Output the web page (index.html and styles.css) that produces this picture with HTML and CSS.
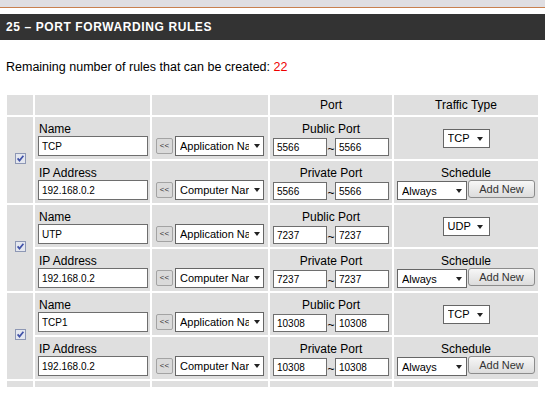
FILE: index.html
```html
<!DOCTYPE html>
<html lang="en">
<head>
  <meta charset="UTF-8">
  <title>Port Forwarding Rules</title>
  <link rel="stylesheet" href="styles.css">
</head>
<body>
  <div class="topband"></div>
  <div class="titlebar">
    <h2>25 &ndash; PORT FORWARDING RULES</h2>
  </div>

  <p class="remaining">Remaining number of rules that can be created: <span class="count">22</span></p>

  <table class="rules">
    <colgroup>
      <col class="c-chk"><col class="c-field"><col class="c-pick"><col class="c-port"><col class="c-type">
    </colgroup>
    <tr class="head">
      <td></td><td></td><td></td><td>Port</td><td>Traffic Type</td>
    </tr>

    <!-- rule 1 -->
    <tr>
      <td class="chk" rowspan="2">
        <span class="checkbox"><svg width="11" height="11" viewBox="0 0 11 11"><rect x="0.5" y="0.5" width="10" height="10" fill="#e4e7ef" stroke="#8d97b4"/><path d="M2.6 5.4 L4.5 7.6 L8.4 2.8" fill="none" stroke="#4152a8" stroke-width="1.7"/></svg></span>
      </td>
      <td class="field">
        <div class="label">Name</div>
        <div class="line"><input class="txt wide" type="text" value="TCP"></div>
      </td>
      <td class="pick">
        <div class="line mid"><button class="grab">&lt;&lt;</button><span class="sel app"><select><option>Application Name</option></select></span></div>
      </td>
      <td class="port">
        <div class="label">Public Port</div>
        <div class="line"><input class="txt num" type="text" value="5566"><span class="tilde">~</span><input class="txt num" type="text" value="5566"></div>
      </td>
      <td class="type">
        <span class="sel proto"><select><option>TCP</option></select></span>
      </td>
    </tr>
    <tr>
      <td class="field">
        <div class="label">IP Address</div>
        <div class="line"><input class="txt wide" type="text" value="192.168.0.2"></div>
      </td>
      <td class="pick">
        <div class="line mid"><button class="grab">&lt;&lt;</button><span class="sel app"><select><option>Computer Name</option></select></span></div>
      </td>
      <td class="port">
        <div class="label">Private Port</div>
        <div class="line"><input class="txt num" type="text" value="5566"><span class="tilde">~</span><input class="txt num" type="text" value="5566"></div>
      </td>
      <td class="sched">
        <div class="label">Schedule</div>
        <div class="line"><span class="sel always"><select><option>Always</option></select></span><button class="add">Add New</button></div>
      </td>
    </tr>

    <!-- rule 2 -->
    <tr>
      <td class="chk" rowspan="2">
        <span class="checkbox"><svg width="11" height="11" viewBox="0 0 11 11"><rect x="0.5" y="0.5" width="10" height="10" fill="#e4e7ef" stroke="#8d97b4"/><path d="M2.6 5.4 L4.5 7.6 L8.4 2.8" fill="none" stroke="#4152a8" stroke-width="1.7"/></svg></span>
      </td>
      <td class="field">
        <div class="label">Name</div>
        <div class="line"><input class="txt wide" type="text" value="UTP"></div>
      </td>
      <td class="pick">
        <div class="line mid"><button class="grab">&lt;&lt;</button><span class="sel app"><select><option>Application Name</option></select></span></div>
      </td>
      <td class="port">
        <div class="label">Public Port</div>
        <div class="line"><input class="txt num" type="text" value="7237"><span class="tilde">~</span><input class="txt num" type="text" value="7237"></div>
      </td>
      <td class="type">
        <span class="sel proto"><select><option>UDP</option></select></span>
      </td>
    </tr>
    <tr>
      <td class="field">
        <div class="label">IP Address</div>
        <div class="line"><input class="txt wide" type="text" value="192.168.0.2"></div>
      </td>
      <td class="pick">
        <div class="line mid"><button class="grab">&lt;&lt;</button><span class="sel app"><select><option>Computer Name</option></select></span></div>
      </td>
      <td class="port">
        <div class="label">Private Port</div>
        <div class="line"><input class="txt num" type="text" value="7237"><span class="tilde">~</span><input class="txt num" type="text" value="7237"></div>
      </td>
      <td class="sched">
        <div class="label">Schedule</div>
        <div class="line"><span class="sel always"><select><option>Always</option></select></span><button class="add">Add New</button></div>
      </td>
    </tr>

    <!-- rule 3 -->
    <tr>
      <td class="chk" rowspan="2">
        <span class="checkbox"><svg width="11" height="11" viewBox="0 0 11 11"><rect x="0.5" y="0.5" width="10" height="10" fill="#e4e7ef" stroke="#8d97b4"/><path d="M2.6 5.4 L4.5 7.6 L8.4 2.8" fill="none" stroke="#4152a8" stroke-width="1.7"/></svg></span>
      </td>
      <td class="field">
        <div class="label">Name</div>
        <div class="line"><input class="txt wide" type="text" value="TCP1"></div>
      </td>
      <td class="pick">
        <div class="line mid"><button class="grab">&lt;&lt;</button><span class="sel app"><select><option>Application Name</option></select></span></div>
      </td>
      <td class="port">
        <div class="label">Public Port</div>
        <div class="line"><input class="txt num" type="text" value="10308"><span class="tilde">~</span><input class="txt num" type="text" value="10308"></div>
      </td>
      <td class="type">
        <span class="sel proto"><select><option>TCP</option></select></span>
      </td>
    </tr>
    <tr>
      <td class="field">
        <div class="label">IP Address</div>
        <div class="line"><input class="txt wide" type="text" value="192.168.0.2"></div>
      </td>
      <td class="pick">
        <div class="line mid"><button class="grab">&lt;&lt;</button><span class="sel app"><select><option>Computer Name</option></select></span></div>
      </td>
      <td class="port">
        <div class="label">Private Port</div>
        <div class="line"><input class="txt num" type="text" value="10308"><span class="tilde">~</span><input class="txt num" type="text" value="10308"></div>
      </td>
      <td class="sched">
        <div class="label">Schedule</div>
        <div class="line"><span class="sel always"><select><option>Always</option></select></span><button class="add">Add New</button></div>
      </td>
    </tr>

    <!-- next rule, cut off by the frame -->
    <tr class="cut">
      <td></td><td></td><td></td><td></td><td></td>
    </tr>
  </table>
</body>
</html>
```

FILE: styles.css
```css
body {
  margin: 0;
  font-family: "Liberation Sans", Arial, sans-serif;
  font-size: 12px;
  color: #000;
  background-color: #fff;
}

.topband {
  height: 7px;
  background-color: #dfdee2;
  border-bottom: 1px solid #c8804f;
}

.titlebar {
  margin-top: 6px;
  height: 26px;
  background-color: #333;
}

.titlebar h2 {
  margin: 0;
  padding: 1px 0 0 6px;
  font-size: 12px;
  line-height: 25px;
  font-weight: bold;
  letter-spacing: 0.6px;
  color: #fff;
}

.remaining {
  margin: 20px 0 0 6px;
  font-size: 12.5px;
  line-height: 14px;
}

.count {
  color: #e00;
}

.rules {
  margin: 19px 0 0 5px;
  border-collapse: separate;
  border-spacing: 2px;
  table-layout: fixed;
  width: 535px;
}

.c-chk { width: 26px; }
.c-field { width: 115px; }
.c-pick { width: 116px; }
.c-port { width: 122px; }
.c-type { width: 144px; }

.rules td {
  background-color: #dfdfdf;
  padding: 0;
}

.head td {
  height: 20px;
  line-height: 20px;
  text-align: center;
}

.cut td {
  height: 6px;
}

.chk {
  vertical-align: middle;
  text-align: center;
}

.checkbox {
  display: inline-block;
  width: 11px;
  height: 11px;
  margin-left: 1px;
}

.checkbox svg {
  display: block;
}

.field, .pick, .port, .sched {
  padding: 5px 0 3px 0 !important;
  vertical-align: bottom;
}

.field {
  padding-left: 3px !important;
}

.label {
  line-height: 14px;
  height: 14px;
}

.field .label {
  padding-left: 1px;
}

.port .label, .sched .label {
  text-align: center;
}

.line {
  display: flex;
  align-items: flex-end;
  height: 20px;
}

.line.mid {
  align-items: center;
  padding-left: 4px;
}

.port .line, .sched .line {
  justify-content: center;
}

.type {
  vertical-align: middle;
  text-align: center;
}

.txt {
  box-sizing: border-box;
  margin: 0;
  padding: 0 3px;
  border: 1px solid #6e6e6e;
  background-color: #fff;
  font-family: "Liberation Sans", Arial, sans-serif;
  font-size: 10px;
  color: #000;
  outline: none;
}

.txt.wide {
  width: 110px;
  height: 20px;
}

.txt.num {
  width: 54px;
  height: 18px;
}

.tilde {
  width: 8px;
  line-height: 14px;
  font-size: 12px;
  text-align: center;
}

.grab {
  box-sizing: border-box;
  width: 17px;
  height: 16px;
  margin: 0 2px 0 0;
  padding: 0;
  border: 1px solid #a3a3a3;
  border-radius: 2px;
  background-color: #dadada;
  font-family: "Liberation Sans", Arial, sans-serif;
  font-size: 8px;
  line-height: 14px;
  color: #333;
}

.sel {
  position: relative;
  display: inline-block;
}

.sel select {
  display: block;
  box-sizing: border-box;
  height: 20px;
  margin: 0;
  padding: 0 14px 0 4px;
  border: 1px solid #666;
  border-radius: 0;
  background-color: #fff;
  font-family: "Liberation Sans", Arial, sans-serif;
  font-size: 11px;
  color: #000;
  -webkit-appearance: none;
  appearance: none;
  outline: none;
}

.sel::after {
  content: "";
  position: absolute;
  right: 4px;
  top: 8px;
  border-left: 3.5px solid transparent;
  border-right: 3.5px solid transparent;
  border-top: 4px solid #222;
}

.sel.app select {
  width: 89px;
}

.sel.proto select {
  width: 47px;
  height: 19px;
}

.sel.proto::after {
  right: 7px;
}

.sel.always select {
  width: 70px;
  height: 19px;
}

.sel.always {
  margin-right: 1px;
}

.sel.always::after {
  right: 5px;
}

.add {
  box-sizing: border-box;
  width: 67px;
  height: 18px;
  margin: 0 0 2px 0;
  padding: 0;
  border: 1px solid #8c8c8c;
  border-radius: 3px;
  background: linear-gradient(#f7f7f7, #dcdcdc);
  font-family: "Liberation Sans", Arial, sans-serif;
  font-size: 11px;
  color: #333;
}
```
